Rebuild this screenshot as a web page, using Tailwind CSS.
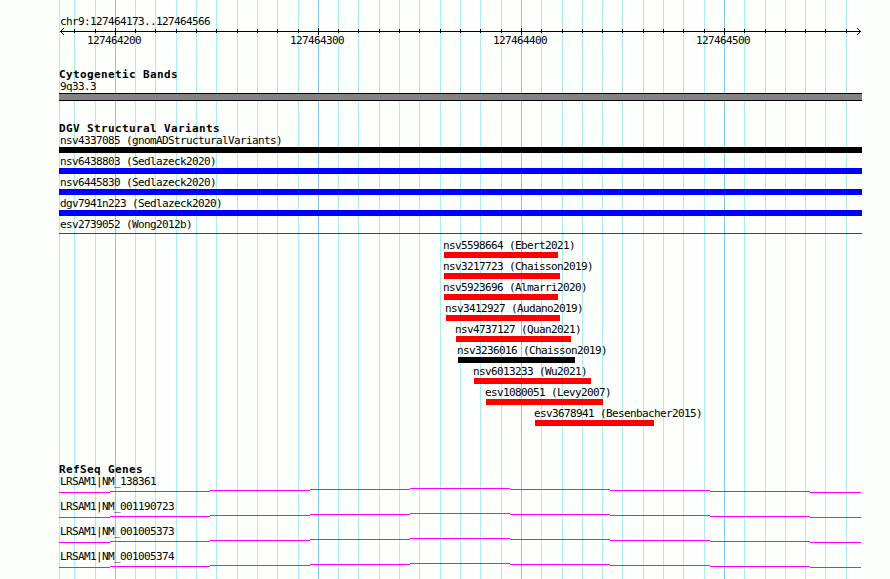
<!DOCTYPE html>
<html lang="en">
<head>
  <meta charset="UTF-8" />
  <meta name="viewport" content="width=device-width, initial-scale=1" />
  <title>chr9:127464173..127464566</title>
  <script src="https://cdn.jsdelivr.net/npm/@tailwindcss/browser@4"></script>
</head>
<body class="bg-[#fdfffc]">
  <main class="relative h-[579px] w-[890px] overflow-hidden font-['DejaVu_Sans_Mono',monospace] text-[11px] leading-[13px] tracking-[-0.622px] whitespace-nowrap text-black">

    <!-- grid lines behind the tracks -->
    <svg id="grid" class="absolute inset-0" width="890" height="579" shape-rendering="crispEdges"></svg>

    <div class="relative ml-[59px] w-[803px] pt-[15px]">
      <!-- ruler -->
      <section>
        <p class="pl-px">chr9:127464173..127464566</p>
        <svg id="ruler" class="block" width="803" height="8" shape-rendering="crispEdges">
          <path d="M1 3h801v1H1z" />
          <path d="M2 2h1v3H2zM3 1h1v1H3zM3 5h1v1H3zM4 0h1v1H4zM4 6h1v1H4z" />
          <path d="M800 2h1v3h-1zM799 1h1v1h-1zM799 5h1v1h-1zM798 0h1v1h-1zM798 6h1v1h-1z" />
        </svg>
        <div class="-mt-0.5 flex gap-[149px] pl-7">
          <span class="w-[54px]">127464200</span>
          <span class="w-[54px]">127464300</span>
          <span class="w-[54px]">127464400</span>
          <span class="w-[54px]">127464500</span>
        </div>
      </section>

      <section class="mt-[21px]">
        <h2 class="font-bold tracking-[0.378px]">Cytogenetic Bands</h2>
        <p class="-mt-px pl-px">9q33.3</p>
        <div class="h-2 border-y border-black bg-[#848284]"></div>
      </section>

      <section class="mt-[21px]">
        <h2 class="font-bold tracking-[0.378px]">DGV Structural Variants</h2>
        <div id="variants" class="-mt-px"></div>
      </section>

      <section class="mt-[35px]">
        <h2 class="font-bold tracking-[0.378px]">RefSeq Genes</h2>
        <div id="genes" class="-mt-px"></div>
      </section>
    </div>
  </main>

  <script>
    const grid = [59, 74, 95, 115, 135, 155, 176, 196, 216, 237, 257, 277, 298, 318, 338, 358, 379, 399, 419, 440, 460,
      480, 501, 521, 541, 562, 582, 602, 622, 643, 663, 683, 704, 724, 744, 765, 785, 805, 825, 846];
    const major = [115, 318, 521, 724];

    document.getElementById("grid").innerHTML = grid.map(x =>
      `<rect x="${x}" y="0" width="1" height="579" fill="${major.includes(x) ? '#84cae9' : '#adeeeb'}" />`
    ).join('');

    document.getElementById("ruler").innerHTML += grid.slice(1).map(x =>
      major.includes(x)
        ? `<rect x="${x - 59}" y="0" width="1" height="7" />`
        : `<rect x="${x - 59}" y="1" width="1" height="4" />`
    ).join('');

    // name, left offset, width, colour
    const variants = [
      ['nsv4337085 (gnomADStructuralVariants)', 0, 803, 'bg-black'],
      ['nsv6438803 (Sedlazeck2020)', 0, 803, 'bg-[#0000ff]'],
      ['nsv6445830 (Sedlazeck2020)', 0, 803, 'bg-[#0000ff]'],
      ['dgv7941n223 (Sedlazeck2020)', 0, 803, 'bg-[#0000ff]'],
      ['esv2739052 (Wong2012b)', 0, 803, ''],
      ['nsv5598664 (Ebert2021)', 385, 114, 'bg-[#ff0000]'],
      ['nsv3217723 (Chaisson2019)', 385, 116, 'bg-[#ff0000]'],
      ['nsv5923696 (Almarri2020)', 385, 114, 'bg-[#ff0000]'],
      ['nsv3412927 (Audano2019)', 387, 114, 'bg-[#ff0000]'],
      ['nsv4737127 (Quan2021)', 397, 115, 'bg-[#ff0000]'],
      ['nsv3236016 (Chaisson2019)', 399, 117, 'bg-black'],
      ['nsv6013233 (Wu2021)', 415, 117, 'bg-[#ff0000]'],
      ['esv1080051 (Levy2007)', 427, 117, 'bg-[#ff0000]'],
      ['esv3678941 (Besenbacher2015)', 476, 119, 'bg-[#ff0000]'],
    ];

    document.getElementById("variants").innerHTML = variants.map(([name, left, width, color]) => `
      <div class="h-[21px]" style="margin-left:${left}px">
        <p class="${left ? '-ml-px' : 'pl-px'}">${name}</p>
        ${color
          ? `<div class="h-1.5 ${color}" style="width:${width}px"></div>`
          : `<div class="pt-0.5"><div class="h-px bg-[#e60000]"></div></div>`}
      </div>
    `).join('');

    const genes = ['LRSAM1|NM_138361', 'LRSAM1|NM_001190723', 'LRSAM1|NM_001005373', 'LRSAM1|NM_001005374'];

    document.getElementById("genes").innerHTML = genes.map(name => `
      <div class="h-[25px]">
        <p class="pl-px">${name}</p>
        <svg class="block" width="803" height="5" shape-rendering="crispEdges" fill="#ff00ff">
          <path d="M0 4h51v1H0zM51 3h100v1H51zM151 2h100v1H151zM251 1h100v1H251zM351 0h100v1H351zM451 1h100v1H451zM551 2h100v1H551zM651 3h100v1H651zM751 4h51v1H751z" />
        </svg>
      </div>
    `).join('');
  </script>
</body>
</html>
